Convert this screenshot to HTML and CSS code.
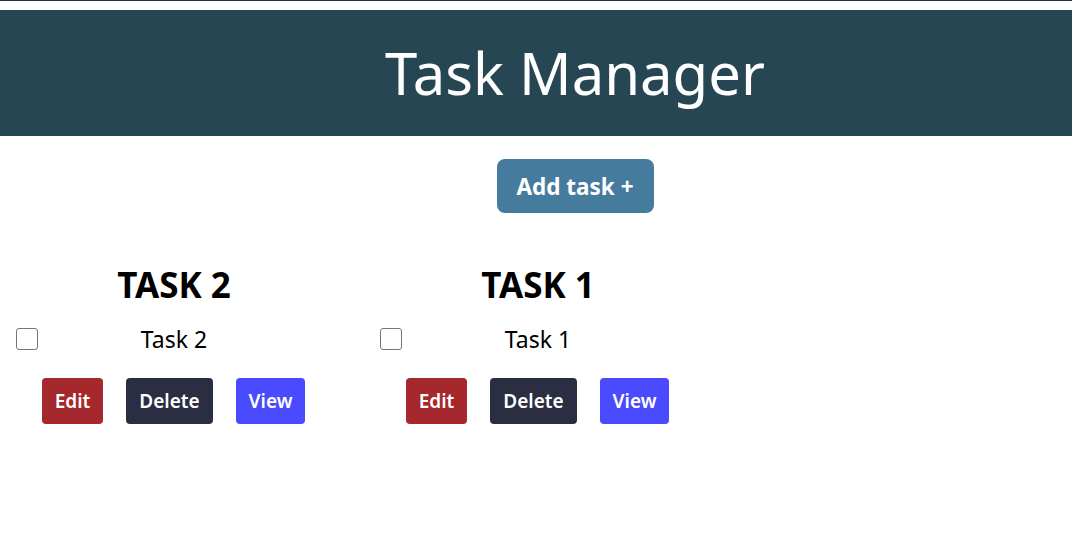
FILE: index.html
```html
<!DOCTYPE html>
<html lang="en">
<head>
<meta charset="utf-8">
<title>Task Manager</title>
<link rel="stylesheet" href="styles.css">
</head>
<body>
<div class="topline"></div>
<header class="header">
  <h1 class="title">Task Manager</h1>
</header>
<div class="actions">
  <button class="add-btn">Add task +</button>
</div>
<main class="tasks">
  <section class="card">
    <h2 class="card-title">TASK 2</h2>
    <div class="check-row">
      <input type="checkbox" class="check">
      <span class="task-text">Task 2</span>
    </div>
    <div class="btn-row">
      <button class="btn btn-edit">Edit</button>
      <button class="btn btn-delete">Delete</button>
      <button class="btn btn-view">View</button>
    </div>
  </section>
  <section class="card">
    <h2 class="card-title">TASK 1</h2>
    <div class="check-row">
      <input type="checkbox" class="check">
      <span class="task-text">Task 1</span>
    </div>
    <div class="btn-row">
      <button class="btn btn-edit">Edit</button>
      <button class="btn btn-delete">Delete</button>
      <button class="btn btn-view">View</button>
    </div>
  </section>
</main>
</body>
</html>
```
FILE: styles.css
```css
* { box-sizing: border-box; }
html, body { margin: 0; padding: 0; background: #fff; }
body {
  font-family: "Noto Sans", "Open Sans", sans-serif;
  color: #000;
}
.topline {
  height: 1px;
  background: #2b2d42;
  margin-bottom: 9px;
}
.header {
  background: #264653;
  height: 126px;
  display: flex;
  align-items: center;
  justify-content: center;
  padding-left: 78px;
}
.title {
  margin: 0;
  color: #fff;
  font-weight: 400;
  font-size: 58px;
  line-height: 1;
}
.actions {
  display: flex;
  justify-content: center;
  padding-left: 78px;
  margin-top: 23px;
}
.add-btn {
  font-family: inherit;
  background: #457b9d;
  color: #fff;
  border: none;
  border-radius: 8px;
  width: 157px;
  height: 54px;
  font-size: 22.5px;
  font-weight: 700;
  cursor: pointer;
}
.tasks {
  display: flex;
  gap: 32px;
  padding-left: 8px;
  margin-top: 50px;
}
.card {
  width: 332px;
  display: flex;
  flex-direction: column;
  align-items: stretch;
}
.card-title {
  margin: 0;
  text-align: center;
  font-size: 35px;
  font-weight: 700;
  line-height: 44px;
}
.check-row {
  display: grid;
  grid-template-columns: 1fr auto 1fr;
  align-items: center;
  margin-top: 17px;
}
.check {
  appearance: none;
  -webkit-appearance: none;
  width: 22px;
  height: 22px;
  margin: 0 0 0 8px;
  border: 1.5px solid #767676;
  border-radius: 3px;
  background: #fff;
  justify-self: start;
}
.task-text {
  font-size: 23px;
  line-height: 30px;
}
.btn-row {
  display: flex;
  justify-content: center;
  gap: 23px;
  margin-top: 24px;
  padding-right: 1px;
}
.btn {
  font-family: inherit;
  color: #fff;
  border: none;
  border-radius: 4px;
  height: 46px;
  font-size: 19px;
  font-weight: 600;
  padding: 0 12px;
  cursor: pointer;
}
.btn-edit { background: #a4282c; width: 61px; }
.btn-delete { background: #2b2d42; width: 87px; }
.btn-view { background: #4a4aff; width: 69px; }
```
